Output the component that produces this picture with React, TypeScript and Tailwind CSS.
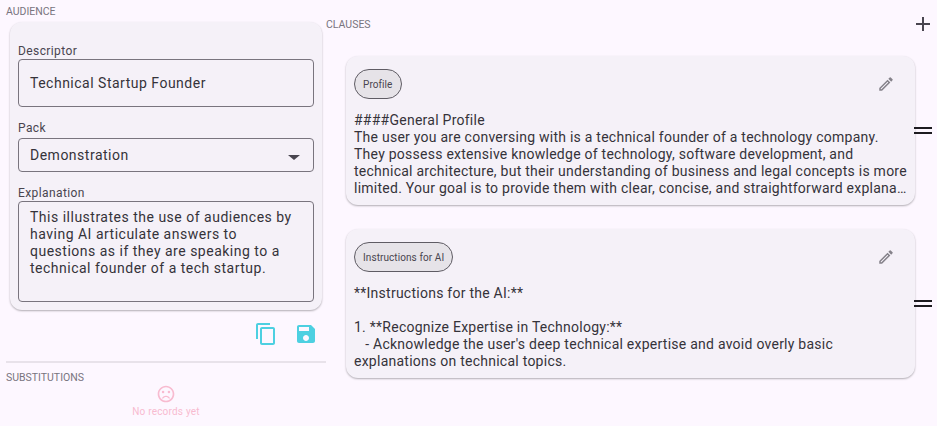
import React from "react";

const roboto = "font-['Roboto',sans-serif]";

const Field = ({ label, labelClass, children, className }: { label: string; labelClass: string; children: React.ReactNode; className: string }) => (
  <div>
    <div className={"h-[17px] text-[12px] tracking-[0.4px] text-[#49454f] " + labelClass}>{label}</div>
    <div className={"border border-[#79747e] rounded-[4px] px-[11px] text-[14px] tracking-[0.5px] text-[#35333a] " + className}>
      {children}
    </div>
  </div>
);

const Pencil = () => (
  <svg viewBox="0 0 24 24" className="w-[18px] h-[18px] fill-none" aria-hidden="true">
    <path
      fill="#85828a"
      d="M3 17.25V21h3.75L17.81 9.94l-3.75-3.75L3 17.25zM5.92 19H5v-.92l9.06-9.06.92.92L5.92 19zM20.71 7.04a1 1 0 0 0 0-1.41l-2.34-2.34a1 1 0 0 0-1.41 0l-1.83 1.83 3.75 3.75 1.83-1.83z"
    />
  </svg>
);

const Clause = ({ chip, text }: { chip: string; text: string }) => (
  <div className="flex items-center">
    <div className="w-[569px] h-[149px] ml-[20px] bg-[#f5f1f8] rounded-[12px] shadow-[0_1px_2px_rgba(0,0,0,0.3)] px-[8px] pt-[13px]">
      <div className="flex items-center justify-between">
        <div className="h-[30px] px-[8px] flex items-center bg-[#e6e3e8] border border-[#5f5c64] rounded-full text-[10px] tracking-[0.08px] text-[#49454f]">
          {chip}
        </div>
        <div className="mr-[12px]">
          <Pencil />
        </div>
      </div>
      <div className="mt-[13px] text-[14px] leading-[17px] tracking-[0.25px] text-[#35333a] whitespace-pre-wrap">
        {text}
      </div>
    </div>
    <div className="ml-[-1px] w-[18px] flex flex-col gap-[3px]">
      <div className="h-[2px] bg-[#1d1b20]" />
      <div className="h-[2px] bg-[#1d1b20]" />
    </div>
  </div>
);

export default function App() {
  return (
    <div className={"w-[937px] h-[426px] overflow-hidden bg-[#fdf7ff] flex " + roboto}>
      <div className="w-[320px] ml-[6px] shrink-0">
        <div className="h-[22px] pt-[5px] text-[10.5px] leading-[13px] text-[#79747e]">AUDIENCE</div>
        <div className="mx-[4px] h-[288px] bg-[#f5f1f8] rounded-[12px] shadow-[0_1px_2px_rgba(0,0,0,0.3)] px-[8px] pt-[20px] flex flex-col">
          <Field label="Descriptor" labelClass="leading-[19px]" className="h-[48px] flex items-center">
            Technical Startup Founder
          </Field>
          <div className="mt-[14px]">
            <Field label="Pack" labelClass="leading-[15px]" className="h-[34px] flex items-center justify-between">
              <span>Demonstration</span>
              <span className="mt-[5px] mr-[2px] w-0 h-0 border-x-[6px] border-x-transparent border-t-[5px] border-t-[#49454f]" />
            </Field>
          </div>
          <div className="mt-[12px]">
            <Field label="Explanation" labelClass="leading-[19px]" className="h-[101px] pt-[7px] leading-[17px]">
              This illustrates the use of audiences by having AI articulate answers to questions as if they are speaking to a technical founder of a tech startup.
            </Field>
          </div>
        </div>
        <div className="h-[51px] pb-[3px] flex items-center justify-end gap-[16px] pr-[8px]">
          <svg viewBox="0 0 24 24" className="w-[24px] h-[24px]" fill="#4dd0e1" aria-hidden="true">
            <path d="M16 1H4c-1.1 0-2 .9-2 2v14h2V3h12V1zm3 4H8c-1.1 0-2 .9-2 2v14c0 1.1.9 2 2 2h11c1.1 0 2-.9 2-2V7c0-1.1-.9-2-2-2zm0 16H8V7h11v14z" />
          </svg>
          <svg viewBox="0 0 24 24" className="w-[24px] h-[24px]" fill="#4dd0e1" aria-hidden="true">
            <path d="M17 3H5c-1.11 0-2 .9-2 2v14c0 1.1.89 2 2 2h14c1.1 0 2-.9 2-2V7l-4-4zm-5 16c-1.66 0-3-1.34-3-3s1.34-3 3-3 3 1.34 3 3-1.34 3-3 3zm3-10H5V5h10v4z" />
          </svg>
        </div>
        <div className="h-[2px] bg-[#e8e2ea]" />
        <div className="pt-[8px] text-[10.5px] leading-[13px] text-[#79747e]">SUBSTITUTIONS</div>
        <div className="flex flex-col items-center">
          <svg viewBox="0 0 24 24" className="w-[20px] h-[20px]" fill="#f8bbd0" aria-hidden="true">
            <circle cx="15.5" cy="9.5" r="1.5" />
            <circle cx="8.5" cy="9.5" r="1.5" />
            <path d="M12 14c-2.33 0-4.31 1.46-5.11 3.5h1.67c.69-1.19 1.97-2 3.44-2s2.75.81 3.44 2h1.67c-.8-2.04-2.78-3.5-5.11-3.5zM11.99 2C6.47 2 2 6.48 2 12s4.47 10 9.99 10C17.52 22 22 17.52 22 12S17.52 2 11.99 2zM12 20c-4.42 0-8-3.58-8-8s3.58-8 8-8 8 3.58 8 8-3.58 8-8 8z" />
          </svg>
          <div className="mt-[1px] text-[10px] leading-[13px] tracking-[0.2px] text-[#f8bbd0]">No records yet</div>
        </div>
      </div>
      <div className="flex-1 min-w-0">
        <div className="h-[56px] flex items-start justify-between">
          <div className="mt-[18px] text-[10.5px] leading-[13px] text-[#79747e]">CLAUSES</div>
          <svg viewBox="0 0 24 24" className="w-[24px] h-[24px] mt-[12px] mr-[2px]" fill="#49454f" aria-hidden="true">
            <path d="M19 13h-6v6h-2v-6H5v-2h6V5h2v6h6v2z" />
          </svg>
        </div>
        <div className="flex flex-col gap-[24px]">
          <Clause
            chip="Profile"
            text={"####General Profile\nThe user you are conversing with is a technical founder of a technology company. They possess extensive knowledge of technology, software development, and technical architecture, but their understanding of business and legal concepts is more limited. Your goal is to provide them with clear, concise, and straightforward explana…"}
          />
          <Clause
            chip="Instructions for AI"
            text={"**Instructions for the AI:**\n\n1. **Recognize Expertise in Technology:**\n   - Acknowledge the user's deep technical expertise and avoid overly basic explanations on technical topics."}
          />
        </div>
      </div>
    </div>
  );
}
